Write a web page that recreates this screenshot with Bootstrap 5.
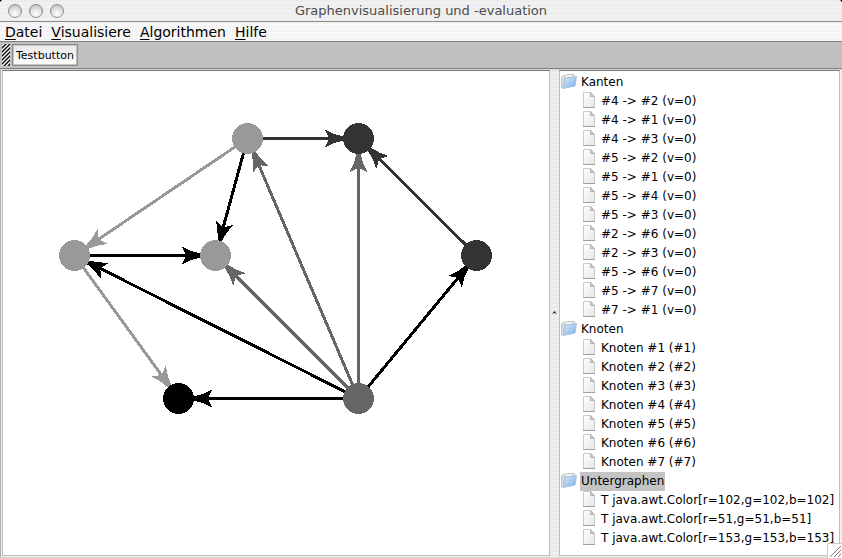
<!DOCTYPE html>
<html lang="de">
<head>
<meta charset="utf-8">
<meta name="viewport" content="width=device-width, initial-scale=1">
<title>Graphenvisualisierung und -evaluation</title>
<link href="https://cdn.jsdelivr.net/npm/bootstrap@5.3.0/dist/css/bootstrap.min.css" rel="stylesheet">
<style>
  body { font-family: "DejaVu Sans", sans-serif; font-size: 12px; line-height: 19px; color: #000; background: #000; }
  .app-window { background: #f0f0f0; border-top-left-radius: 4px; border-top-right-radius: 4px; overflow: hidden; }
  .titlebar { height: 22px; border-bottom: 1px solid #8a8a8a; background: repeating-linear-gradient(#ededed 0 2px, #f1f1f1 2px 4px); }
  .window-title { font-size: 13px; line-height: 22px; font-weight: 400; color: #4c4c4c; }
  .window-lights { left: 8px; top: 4px; gap: 7px; }
  .light { width: 14px; height: 14px; border: 1px solid #8b8b8b; border-radius: 50%; background: radial-gradient(circle at 50% 75%, #fff 0, #e4e4e4 45%, #b4b4b4 100%); }
  .menubar { height: 20px; padding-left: 5px; gap: 9px; border-bottom: 1px solid #808080; background: repeating-linear-gradient(#f3f3f3 0 2px, #f8f8f8 2px 4px); }
  .menubar a { font-size: 14px; line-height: 20px; color: #000; text-decoration: none; }
  .menubar u { text-underline-offset: 2px; text-decoration-thickness: 1px; }
  .toolbar { height: 27px; padding-left: 2px; gap: 2px; background: #c0c0c0; border-bottom: 1px solid #808080; }
  .grip { width: 8px; height: 22px; }
  .tool-button { height: 22px; padding: 1px 3px 0; font-size: 11px; line-height: 19px; color: #000; border: 1px solid #8c8c8c; box-shadow: inset 0 0 0 1px #c4c4c4; background: linear-gradient(#e9e9e9, #fdfdfd); }
  .workspace { border-top: 1px solid #d8d8d8; border-left: 1px solid #b0b0b0; border-bottom: 1px solid #d5d5d5; padding: 0 0 1px 1px; }
  .pane { background: #fff; border: 1px solid #bdbdbd; border-top-color: #777; }
  .divider-bar { width: 9px; border: 0; padding: 0; background: repeating-linear-gradient(#e9e9e9 0 2px, #f0f0f0 2px 4px); }
  .tree-pane { flex: 0 0 281px; padding: 2px 0 6px; margin-right: 2px; }
  .tree-pane ul { list-style: none; margin: 0; padding: 0; }
  .branch, .leaf { height: 19px; white-space: nowrap; }
  .branch { padding-left: 1px; gap: 3px; }
  .leaf { padding-left: 23px; gap: 6px; }
  .branch span { padding: 0 1px; }
  .chosen { background: #c4c4c4; }
  .resizer { right: 0; bottom: 0; background: #fff; }
</style>
<script src="https://cdn.jsdelivr.net/npm/bootstrap@5.3.0/dist/js/bootstrap.bundle.min.js"></script>
</head>
<body>
<svg width="0" height="0" class="position-absolute" aria-hidden="true">
  <defs>
    <linearGradient id="blue" x1="0" y1="0" x2="1" y2="1"><stop offset="0" stop-color="#d6eafb"/><stop offset="1" stop-color="#7fb0e2"/></linearGradient>
    <linearGradient id="paper" x1="0" y1="0" x2="1" y2="1"><stop offset="0" stop-color="#fff"/><stop offset="1" stop-color="#e6e6e6"/></linearGradient>
    <symbol id="folder" viewBox="0 0 16 16">
      <path d="M.5 14.500V4.500L2 2.500H5L6 1.500H13V4L4 6Z" fill="#f2f2f2" stroke="#b0b0b0" stroke-width=".8"/>
      <path d="M.5 4.500V14.500L2 15.500L4 6V4Z" fill="#dcdfe2" stroke="#b0b4b8" stroke-width=".5"/>
      <path d="M4 5L15.500 3.500L14 13L2 15.500Z" fill="url(#blue)" stroke="#8fb4d8" stroke-width=".7"/>
    </symbol>
    <symbol id="file" viewBox="0 0 12 16">
      <path d="M.5 .5H7.500L11.500 4.500V15.500H.5Z" fill="url(#paper)" stroke="#cbcbcb"/>
      <path d="M0 15.500H12" fill="none" stroke="#a0a0a0"/>
      <path d="M7.500 .5V4.500H11.500Z" fill="#ccc" stroke="#aaa" stroke-width=".8"/>
    </symbol>
  </defs>
</svg>
<div class="app-window d-flex flex-column min-vh-100 position-relative">
  <header class="titlebar position-relative text-center">
    <div class="window-lights position-absolute d-flex"><span class="light"></span><span class="light"></span><span class="light"></span></div>
    <h1 class="window-title m-0">Graphenvisualisierung und -evaluation</h1>
  </header>
  <nav class="menubar d-flex">
    <a href="#"><u>D</u>atei</a><a href="#"><u>V</u>isualisiere</a><a href="#"><u>A</u>lgorithmen</a><a href="#"><u>H</u>ilfe</a>
  </nav>
  <div class="toolbar d-flex align-items-center">
    <svg class="grip" aria-hidden="true"><defs><pattern id="hatch" width="4" height="4" patternUnits="userSpaceOnUse"><rect width="4" height="4" fill="#fff"/><path d="M-1 5L5 -1M-1 1L1 -1M3 5L5 3" stroke="#000" stroke-width="1.300"/></pattern></defs><rect width="8" height="22" fill="url(#hatch)"/></svg>
    <button type="button" class="tool-button">Testbutton</button>
  </div>
  <main class="workspace d-flex flex-grow-1">
    <section class="pane flex-grow-1 d-flex" aria-label="Graph">
      <svg class="w-100" shape-rendering="crispEdges" stroke-width="3">
        <defs>
          <marker id="tip0" refX="34" refY="9" markerWidth="19" markerHeight="18" markerUnits="userSpaceOnUse" orient="auto"><path d="M0 0Q9 5 19 7V11Q9 13 0 18L5 9Z" fill="#000"/></marker>
          <marker id="tip51" refX="34" refY="9" markerWidth="19" markerHeight="18" markerUnits="userSpaceOnUse" orient="auto"><path d="M0 0Q9 5 19 7V11Q9 13 0 18L5 9Z" fill="#333"/></marker>
          <marker id="tip102" refX="34" refY="9" markerWidth="19" markerHeight="18" markerUnits="userSpaceOnUse" orient="auto"><path d="M0 0Q9 5 19 7V11Q9 13 0 18L5 9Z" fill="#666"/></marker>
          <marker id="tip153" refX="34" refY="9" markerWidth="19" markerHeight="18" markerUnits="userSpaceOnUse" orient="auto"><path d="M0 0Q9 5 19 7V11Q9 13 0 18L5 9Z" fill="#999"/></marker>
        </defs>
        <g stroke="#999"><path d="M244.500 67.500L71.500 184.500" marker-end="url(#tip153)"/><path d="M71.500 184.500L175.500 327.500" marker-end="url(#tip153)"/></g>
        <g stroke="#000"><path d="M244.500 67.500L212.500 184.500" marker-end="url(#tip0)"/><path d="M71.500 184.500H212.500" marker-end="url(#tip0)"/><path d="M355.500 327.500L71.500 184.500" marker-end="url(#tip0)"/><path d="M355.500 327.500H175.500" marker-end="url(#tip0)"/><path d="M355.500 327.500L473.500 184.500" marker-end="url(#tip0)"/></g>
        <g stroke="#333"><path d="M244.500 67.500H355.500" marker-end="url(#tip51)"/><path d="M473.500 184.500L355.500 67.500" marker-end="url(#tip51)"/></g>
        <g stroke="#666"><path d="M355.500 327.500L244.500 67.500" marker-end="url(#tip102)"/><path d="M355.500 327.500V67.500" marker-end="url(#tip102)"/><path d="M355.500 327.500L212.500 184.500" marker-end="url(#tip102)"/></g>
        <g stroke="none">
          <circle cx="244.500" cy="67.500" r="15.500" fill="#999"/><circle cx="71.500" cy="184.500" r="15.500" fill="#999"/><circle cx="212.500" cy="184.500" r="15.500" fill="#999"/>
          <circle cx="355.500" cy="67.500" r="15.500" fill="#333"/><circle cx="473.500" cy="184.500" r="15.500" fill="#333"/>
          <circle cx="175.500" cy="327.500" r="15.500" fill="#000"/><circle cx="355.500" cy="327.500" r="15.500" fill="#666"/>
        </g>
      </svg>
    </section>
    <button type="button" class="divider-bar d-flex align-items-center justify-content-center" aria-label="Teiler"><svg width="5" height="4" aria-hidden="true"><path d="M0 3L2.500 0L5 3L2.500 2Z" fill="#222"/></svg></button>
    <aside class="pane tree-pane">
      <ul>
        <li><div class="branch d-flex align-items-start"><svg width="16" height="16"><use href="#folder"/></svg><span>Kanten</span></div>
          <ul>
            <li class="leaf d-flex align-items-start"><svg width="12" height="16"><use href="#file"/></svg>#4 -&gt; #2 (v=0)</li>
            <li class="leaf d-flex align-items-start"><svg width="12" height="16"><use href="#file"/></svg>#4 -&gt; #1 (v=0)</li>
            <li class="leaf d-flex align-items-start"><svg width="12" height="16"><use href="#file"/></svg>#4 -&gt; #3 (v=0)</li>
            <li class="leaf d-flex align-items-start"><svg width="12" height="16"><use href="#file"/></svg>#5 -&gt; #2 (v=0)</li>
            <li class="leaf d-flex align-items-start"><svg width="12" height="16"><use href="#file"/></svg>#5 -&gt; #1 (v=0)</li>
            <li class="leaf d-flex align-items-start"><svg width="12" height="16"><use href="#file"/></svg>#5 -&gt; #4 (v=0)</li>
            <li class="leaf d-flex align-items-start"><svg width="12" height="16"><use href="#file"/></svg>#5 -&gt; #3 (v=0)</li>
            <li class="leaf d-flex align-items-start"><svg width="12" height="16"><use href="#file"/></svg>#2 -&gt; #6 (v=0)</li>
            <li class="leaf d-flex align-items-start"><svg width="12" height="16"><use href="#file"/></svg>#2 -&gt; #3 (v=0)</li>
            <li class="leaf d-flex align-items-start"><svg width="12" height="16"><use href="#file"/></svg>#5 -&gt; #6 (v=0)</li>
            <li class="leaf d-flex align-items-start"><svg width="12" height="16"><use href="#file"/></svg>#5 -&gt; #7 (v=0)</li>
            <li class="leaf d-flex align-items-start"><svg width="12" height="16"><use href="#file"/></svg>#7 -&gt; #1 (v=0)</li>
          </ul>
        </li>
        <li><div class="branch d-flex align-items-start"><svg width="16" height="16"><use href="#folder"/></svg><span>Knoten</span></div>
          <ul>
            <li class="leaf d-flex align-items-start"><svg width="12" height="16"><use href="#file"/></svg>Knoten #1 (#1)</li>
            <li class="leaf d-flex align-items-start"><svg width="12" height="16"><use href="#file"/></svg>Knoten #2 (#2)</li>
            <li class="leaf d-flex align-items-start"><svg width="12" height="16"><use href="#file"/></svg>Knoten #3 (#3)</li>
            <li class="leaf d-flex align-items-start"><svg width="12" height="16"><use href="#file"/></svg>Knoten #4 (#4)</li>
            <li class="leaf d-flex align-items-start"><svg width="12" height="16"><use href="#file"/></svg>Knoten #5 (#5)</li>
            <li class="leaf d-flex align-items-start"><svg width="12" height="16"><use href="#file"/></svg>Knoten #6 (#6)</li>
            <li class="leaf d-flex align-items-start"><svg width="12" height="16"><use href="#file"/></svg>Knoten #7 (#7)</li>
          </ul>
        </li>
        <li><div class="branch d-flex align-items-start"><svg width="16" height="16"><use href="#folder"/></svg><span class="chosen">Untergraphen</span></div>
          <ul>
            <li class="leaf d-flex align-items-start"><svg width="12" height="16"><use href="#file"/></svg>T java.awt.Color[r=102,g=102,b=102]</li>
            <li class="leaf d-flex align-items-start"><svg width="12" height="16"><use href="#file"/></svg>T java.awt.Color[r=51,g=51,b=51]</li>
            <li class="leaf d-flex align-items-start"><svg width="12" height="16"><use href="#file"/></svg>T java.awt.Color[r=153,g=153,b=153]</li>
          </ul>
        </li>
      </ul>
    </aside>
  </main>
  <svg class="resizer position-absolute" width="15" height="15" aria-hidden="true"><path d="M.5 15V.5H15" fill="none" stroke="#c8c8c8"/><path d="M3 14L14 3M7 14L14 7M11 14L14 11" stroke="#777"/></svg>
</div>
</body>
</html>
